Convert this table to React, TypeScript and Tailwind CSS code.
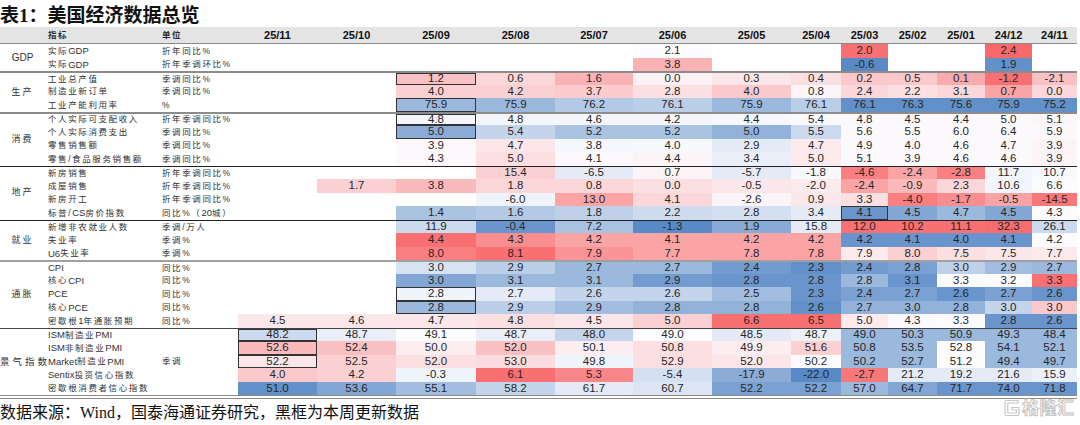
import React from "react";

type Row = { name: string; unit: string; cells: string[] };
type Group = { label: string; labelCls: string; sep: string; rows: Row[] };

const COLS =
  "grid grid-cols-[117px_76px_79px_79px_80px_79px_78px_79px_79px_50px_47px_49px_48px_47px_45px]";

const DATES = ["25/11", "25/10", "25/09", "25/08", "25/07", "25/06", "25/05", "25/04", "25/03", "25/02", "25/01", "24/12", "24/11"];

const E = "";

const GROUPS: Group[] = [
  {
    label: "GDP",
    labelCls: "justify-center text-[10px]",
    sep: "",
    rows: [
      { name: "实际GDP", unit: "折年同比%", cells: [E, E, E, E, E, "2.1@0", E, E, "2.0@.95", E, E, "2.4@1", E] },
      { name: "实际GDP", unit: "折年季调环比%", cells: [E, E, E, E, E, "3.8@.5", E, E, "-0.6@-1", E, E, "1.9@-.95", E] },
    ],
  },
  {
    label: "生产",
    labelCls: "justify-center text-[9px] tracking-[2px]",
    sep: "border-t-2 border-[#8c8c8c]",
    rows: [
      { name: "工业总产值", unit: "季调同比%", cells: [E, E, "1.2@.4#", "0.6@.25", "1.6@.5", "0.0@.07", "0.3@.15", "0.4@.2", "0.2@.35", "0.5@.35", "0.1@.55", "-1.2@.95", "-2.1@.4"] },
      { name: "制造业新订单", unit: "季调同比%", cells: [E, E, "4.0@.3", "4.2@.3", "3.7@.33", "2.8@.2", "4.0@.35", "0.8@.05", "2.4@.25", "2.2@.2", "3.1@.25", "0.7@.6", "0.0@.25"] },
      { name: "工业产能利用率", unit: "%", cells: [E, E, "75.9@-.6#", "75.9@-.6", "76.2@-.45", "76.1@-.4", "75.9@-.6", "76.1@-.4", "76.1@-.95", "76.3@-.95", "75.6@-.95", "75.9@-.95", "75.2@-.95"] },
    ],
  },
  {
    label: "消费",
    labelCls: "justify-center text-[9px] tracking-[2px]",
    sep: "border-t-2 border-[#8c8c8c]",
    rows: [
      { name: "个人实际可支配收入", unit: "折年季调同比%", cells: [E, E, "4.8@-.05#", "4.8@-.05", "4.6@-.05", "4.2@-.05", "4.4@-.04", "5.4@.02", "4.8@.03", "4.5@.03", "4.4@.03", "5.0@.03", "5.1@.04"] },
      { name: "个人实际消费支出", unit: "季调同比%", cells: [E, E, "5.0@-.7#", "5.4@-.35", "5.2@-.5", "5.2@-.5", "5.0@-.65", "5.5@-.3", "5.6@.02", "5.5@.02", "6.0@.02", "6.4@.02", "5.9@.03"] },
      { name: "零售销售额", unit: "季调同比%", cells: [E, E, "3.9@.03", "4.7@.15", "3.8@-.04", "4.0@-.03", "2.9@-.15", "4.7@.12", "4.9@.02", "4.0@.02", "4.6@.02", "4.7@.02", "3.9@.06"] },
      { name: "零售/食品服务销售额", unit: "季调同比%", cells: [E, E, "4.3@.03", "5.0@.2", "4.1@.03", "4.4@.05", "3.4@-.12", "5.0@.12", "5.1@.02", "3.9@.02", "4.6@.02", "4.6@.02", "3.9@.06"] },
    ],
  },
  {
    label: "地产",
    labelCls: "justify-center text-[9px] tracking-[2px]",
    sep: "border-t border-[#222]",
    rows: [
      { name: "新房销售", unit: "折年季调同比%", cells: [E, E, E, "15.4@.3", "-6.5@-.15", "0.7@.05", "-5.7@-.15", "-1.8@-.03", "-4.6@.85", "-2.4@.6", "-2.8@.85", "11.7@-.06", "10.7@-.03"] },
      { name: "成屋销售", unit: "折年季调同比%", cells: [E, "1.7@.3", "3.8@.45", "1.8@.25", "0.8@.25", "0.0@.2", "-0.5@.15", "-2.0@.12", "-2.4@.6", "-0.9@.45", "2.3@.25", "10.6@-.06", "6.6@0"] },
      { name: "新房开工", unit: "折年季调同比%", cells: [E, E, E, "-6.0@-.08", "13.0@.6", "4.1@.25", "-2.6@.05", "0.9@.15", "3.3@.2", "-4.0@.85", "-1.7@.75", "-0.5@.6", "-14.5@.9"] },
      { name: "标普/CS房价指数", unit: "同比%（20城）", cells: [E, E, "1.4@-.5", "1.6@-.45", "1.8@-.38", "2.2@-.28", "2.8@-.25", "3.4@-.15", "4.1@-.9#", "4.5@-.75", "4.7@-.6", "4.5@-.75", "4.3@0"] },
    ],
  },
  {
    label: "就业",
    labelCls: "justify-center text-[9px] tracking-[2px]",
    sep: "border-t border-[#222]",
    rows: [
      { name: "新增非农就业人数", unit: "季调/万人", cells: [E, E, "11.9@-.3", "-0.4@-.9", "7.2@-.5", "-1.3@-1", "1.9@-.72", "15.8@-.15", "12.0@.95", "10.2@.95", "11.1@.95", "32.3@.98", "26.1@-.3"] },
      { name: "失业率", unit: "季调%", cells: [E, E, "4.4@.95", "4.3@.75", "4.2@.6", "4.1@.6", "4.2@.6", "4.2@.6", "4.2@-.9", "4.1@-.9", "4.0@-.9", "4.1@-.9", "4.2@0"] },
      { name: "U6失业率", unit: "季调%", cells: [E, E, "8.0@.85", "8.1@.95", "7.9@.7", "7.7@.6", "7.8@.6", "7.8@.6", "7.9@.12", "8.0@.3", "7.5@.2", "7.5@.15", "7.7@.12"] },
    ],
  },
  {
    label: "通胀",
    labelCls: "justify-center text-[9px] tracking-[2px]",
    sep: "border-t-2 border-[#a0a0a0]",
    rows: [
      { name: "CPI", unit: "同比%", cells: [E, E, "3.0@-.22", "2.9@-.4", "2.7@-.6", "2.7@-.6", "2.4@-.85", "2.3@-.95", "2.4@-.85", "2.8@-.8", "3.0@-.38", "2.9@-.55", "2.7@-.6"] },
      { name: "核心CPI", unit: "同比%", cells: [E, E, "3.0@-.75", "3.1@-.6", "3.1@-.6", "2.9@-.85", "2.8@-.9", "2.8@-.9", "2.8@-.6", "3.1@-.9", "3.3@0", "3.2@0", "3.3@.95"] },
      { name: "PCE", unit: "同比%", cells: [E, E, "2.8@-.07#", "2.7@-.15", "2.6@-.35", "2.6@-.35", "2.5@-.55", "2.3@-.9", "2.4@-.8", "2.7@-.8", "2.6@-.9", "2.7@-.8", "2.6@-.9"] },
      { name: "核心PCE", unit: "同比%", cells: [E, E, "2.8@-.6#", "2.9@-.4", "2.9@-.55", "2.8@-.65", "2.8@-.65", "2.6@-.95", "2.7@-.65", "3.0@-.65", "2.8@-.65", "3.0@-.35", "3.0@.35"] },
      { name: "密歇根1年通胀预期", unit: "同比%", cells: ["4.5@.15", "4.6@.15", "4.7@.15", "4.8@.2", "4.5@.15", "5.0@.3", "6.6@.95", "6.5@.95", "5.0@.12", "4.3@.02", "3.3@0", "2.8@-.9", "2.6@-.9"] },
    ],
  },
  {
    label: "景气指数",
    labelCls: "justify-start text-[9.5px] tracking-[3px]",
    sep: "border-t border-[#444]",
    rows: [
      { name: "ISM制造业PMI", unit: "", cells: ["48.2@-.3#", "48.7@-.12", "49.1@0", "48.7@-.12", "48.0@-.35", "49.0@0", "48.5@-.15", "48.7@-.1", "49.0@-.6", "50.3@-.6", "50.9@-.6", "49.3@-.6", "48.4@-.6"] },
      { name: "ISM非制造业PMI", unit: "", cells: ["52.6@.45#", "52.4@.4", "50.0@.1", "52.0@.4", "50.1@.1", "50.8@.2", "49.9@.1", "51.6@.3", "50.8@-.6", "53.5@-.6", "52.8@0", "54.1@-.6", "52.1@-.6"] },
      { name: "Market制造业PMI", unit: "季调", cells: ["52.2@.15#", "52.5@.3", "52.0@.2", "53.0@.22", "49.8@-.08", "52.9@.2", "52.0@.15", "50.2@0", "50.2@-.6", "52.7@-.6", "51.2@0", "49.4@-.6", "49.7@-.6"] },
      { name: "Sentix投资信心指数", unit: "", cells: ["4.0@.35", "4.2@.3", "-0.3@-.08", "6.1@.95", "5.3@.8", "-5.4@-.25", "-17.9@-.7", "-22.0@-1", "-2.7@.9", "21.2@-.15", "19.2@-.15", "21.6@-.15", "15.9@-.1"] },
      { name: "密歇根消费者信心指数", unit: "", cells: ["51.0@-.95", "53.6@-.75", "55.1@-.55", "58.2@-.35", "61.7@-.15", "60.7@-.2", "52.2@-.8", "52.2@-.8", "57.0@-.6", "64.7@-.75", "71.7@-.9", "74.0@-.9", "71.8@-.9"] },
    ],
  },
];

function heat(t: number): string {
  const w = [252, 252, 255];
  const e = t >= 0 ? [248, 105, 107] : [90, 138, 198];
  const a = Math.min(1, Math.abs(t));
  const c = w.map((v, i) => Math.round(v + (e[i] - v) * a));
  return `rgb(${c[0]},${c[1]},${c[2]})`;
}

function Mixed({ text, bold = false }: { text: string; bold?: boolean }) {
  const parts = text.match(/[A-Za-z0-9.]+|[^A-Za-z0-9.]+/g) || [];
  return (
    <>
      {parts.map((p, i) =>
        /[A-Za-z0-9]/.test(p[0]) ? (
          <span key={i} className="text-[9.5px] tracking-normal">
            {p}
          </span>
        ) : (
          <span key={i} className={`text-[8.5px] tracking-[1.6px] ${bold ? "font-bold" : ""}`}>
            {p}
          </span>
        )
      )}
    </>
  );
}

function Cell({ spec }: { spec: string }) {
  if (!spec) return <div />;
  const boxed = spec.endsWith("#");
  const [val, ts] = spec.replace("#", "").split("@");
  const t = parseFloat(ts);
  return (
    <div
      className={`flex items-center justify-center leading-none ${
        boxed ? "outline outline-1 outline-offset-[-1px] outline-[#333]" : ""
      }`}
      style={{ backgroundColor: heat(t) }}
    >
      {val}
    </div>
  );
}

function GLogo() {
  return (
    <svg width="16" height="18" viewBox="0 0 16 18" fill="none" stroke="#c6c6c6" strokeWidth="1.2">
      <path d="M14 3.5 V1.5 H2.5 Q1 1.5 1 3 V15 Q1 16.5 2.5 16.5 H13.5 Q15 16.5 15 15 V8.5 H8 V11 H12.5 V14 H3.8 V4 H14 Z" />
    </svg>
  );
}

export default function App() {
  return (
    <div className="relative w-[1080px] h-[425px] bg-white overflow-hidden text-[#262626] [font-family:'Liberation_Sans','Noto_Sans_CJK_SC',sans-serif]">
      {/* title */}
      <div className="h-[27px] flex items-center pt-[3px] [font-family:'Liberation_Serif','Noto_Sans_CJK_SC',serif] text-[19px] font-bold text-[#111] leading-none">
        表1：美国经济数据总览
      </div>

      <div className="w-[1077px]">
        {/* header */}
        <div className="flex h-[17px] bg-[#e4e4e4] border-b border-[#8a8a8a]">
          <div className="w-[45px]" />
          <div className={COLS}>
            <div className="flex items-center pl-[3px] font-bold">
              <Mixed text="指标" bold />
            </div>
            <div className="flex items-center font-bold">
              <Mixed text="单位" bold />
            </div>
            {DATES.map((d) => (
              <div key={d} className="flex items-center justify-center text-[11px] font-bold text-[#111]">
                {d}
              </div>
            ))}
          </div>
        </div>

        {/* groups */}
        {GROUPS.map((g) => (
          <div key={g.label} className="flex">
            <div
              className={`w-[45px] shrink-0 flex items-center whitespace-nowrap text-[#333] ${g.sep} ${g.labelCls}`}
            >
              {g.label}
            </div>
            <div className="flex flex-col">
              {g.rows.map((r, ri) => (
                <div key={r.name + ri} className={`${COLS} h-[13.5px] text-[11.5px] ${ri === 0 ? g.sep : ""}`}>
                  <div className="flex items-center pl-[3px] whitespace-nowrap text-[#333] leading-none">
                    <Mixed text={r.name} />
                  </div>
                  <div className="flex items-center whitespace-nowrap text-[#333] leading-none">
                    <Mixed text={r.unit} />
                  </div>
                  {r.cells.map((c, ci) => (
                    <Cell key={ci} spec={c} />
                  ))}
                </div>
              ))}
            </div>
          </div>
        ))}

        {/* bottom double rule */}
        <div className="h-[4px] border-t border-b border-[#8a8a8a]" />
      </div>

      {/* footer */}
      <div className="mt-[4px] h-[20px] flex items-center [font-family:'Liberation_Serif','Noto_Sans_CJK_SC',serif] text-[16px] text-[#111] leading-none">
        数据来源：Wind，国泰海通证券研究，黑框为本周更新数据
      </div>

      {/* watermark */}
      <div className="absolute left-[1004px] top-[399px] flex items-center gap-[2px]">
        <GLogo />
        <span className="text-[17px] font-bold leading-none text-white [-webkit-text-stroke:0.9px_#c2c2c2] tracking-[0.5px]">
          格隆汇
        </span>
      </div>
    </div>
  );
}
